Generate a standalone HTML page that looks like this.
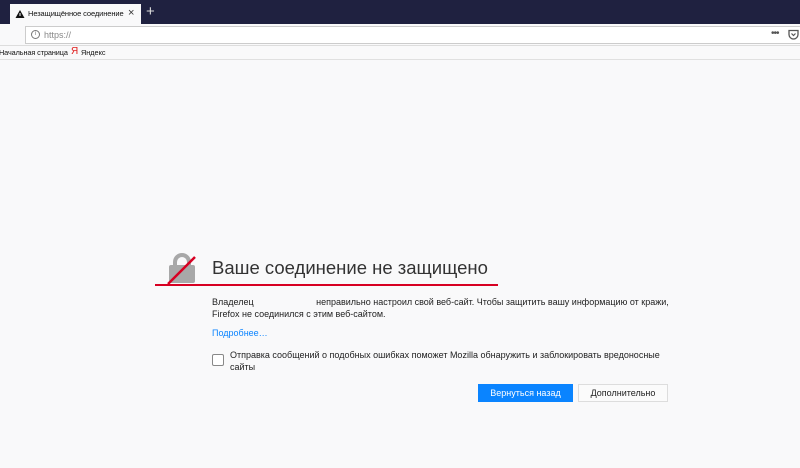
<!DOCTYPE html>
<html><head><meta charset="utf-8"><style>
*{margin:0;padding:0;box-sizing:border-box}
body{width:800px;height:468px;overflow:hidden;background:#f9f9fa;font-family:"Liberation Sans","Noto Sans CJK SC",sans-serif;position:relative;color:#0c0c0d}
.abs{position:absolute;white-space:nowrap}
</style></head><body>
<div class="abs" style="left:0;top:0;width:800px;height:24px;background:#1f2140"></div>
<div class="abs" style="left:10px;top:4px;width:131px;height:20px;background:#f9f9fa"></div>
<svg class="abs" style="left:15px;top:9px" width="10" height="10"><path d="M5 1 L9.5 9 L0.5 9 Z" fill="#111"/><rect x="4.5" y="4" width="1" height="3" fill="#fff"/></svg>
<div class="abs" style="left:28px;top:9px;font-size:7.5px;color:#111;letter-spacing:-0.1px">Незащищённое соединение</div>
<div class="abs" style="left:128px;top:7px;font-size:11px;color:#333">×</div>
<div class="abs" style="left:146px;top:3px;font-size:15px;color:#ddd">+</div>
<div class="abs" style="left:0;top:24px;width:800px;height:22px;background:#f9f9fa;border-bottom:1px solid #ddd"></div>
<div class="abs" style="left:25px;top:26px;width:775px;height:18px;background:#fff;border:1px solid #ccc;border-right:none"></div>
<div class="abs" style="left:31px;top:30px;width:9px;height:9px;border:1px solid #777;border-radius:50%;font-size:6px;color:#777;text-align:center;line-height:7px">i</div>
<div class="abs" style="left:44px;top:30px;font-size:9px;color:#888">https://</div>
<div class="abs" style="left:771px;top:28px;font-size:10px;color:#555;letter-spacing:-1px">•••</div>
<svg class="abs" style="left:788px;top:29px" width="11" height="11"><path d="M1 1.5h9v4a4.5 4.5 0 0 1-9 0z" fill="none" stroke="#555" stroke-width="1.3"/><path d="M3.5 4.5l2 2 2-2" fill="none" stroke="#555" stroke-width="1.2"/></svg>
<div class="abs" style="left:0;top:47px;width:800px;height:13px;border-bottom:1px solid #e0e0e0"></div>
<div class="abs" style="left:-1px;top:48px;font-size:7.3px;color:#111;letter-spacing:-0.1px">Начальная страница</div>
<div class="abs" style="left:71px;top:46px;font-size:10px;color:#e02020">Я</div>
<div class="abs" style="left:81px;top:48px;font-size:7.3px;color:#111">Яндекс</div>
<svg class="abs" style="left:166px;top:250px" width="32" height="36">
<path d="M9 17 V12 a7 7 0 0 1 14 0 V17" fill="none" stroke="#a8a8a8" stroke-width="4"/>
<rect x="3" y="15" width="26" height="18" rx="2" fill="#a8a8a8"/>
<line x1="2" y1="34" x2="29" y2="7" stroke="#d70022" stroke-width="2.5"/>
</svg>
<div class="abs" style="left:212px;top:257px;font-size:18.5px;font-weight:300;color:#333">Ваше соединение не защищено</div>
<div class="abs" style="left:155px;top:284px;width:343px;height:2px;background:#d70022"></div>
<div class="abs" style="left:212px;top:296px;font-size:9px;line-height:12px;color:#222">Владелец <span style="display:inline-block;width:60px"></span>неправильно настроил свой веб-сайт. Чтобы защитить вашу информацию от кражи,<br>Firefox не соединился с этим веб-сайтом.</div>
<div class="abs" style="left:212px;top:328px;font-size:9px;color:#0a84ff">Подробнее…</div>
<div class="abs" style="left:212px;top:354px;width:12px;height:12px;border:1px solid #888;border-radius:2px;background:#fff"></div>
<div class="abs" style="left:230px;top:349px;font-size:9px;line-height:12px;color:#222">Отправка сообщений о подобных ошибках поможет Mozilla обнаружить и заблокировать вредоносные<br>сайты</div>
<div class="abs" style="left:478px;top:384px;width:95px;height:18px;background:#0a84ff;color:#fff;font-size:9px;text-align:center;line-height:18px">Вернуться назад</div>
<div class="abs" style="left:578px;top:384px;width:90px;height:18px;background:#fbfbfb;border:1px solid #ddd;color:#222;font-size:9px;text-align:center;line-height:16px">Дополнительно</div>
</body></html>
